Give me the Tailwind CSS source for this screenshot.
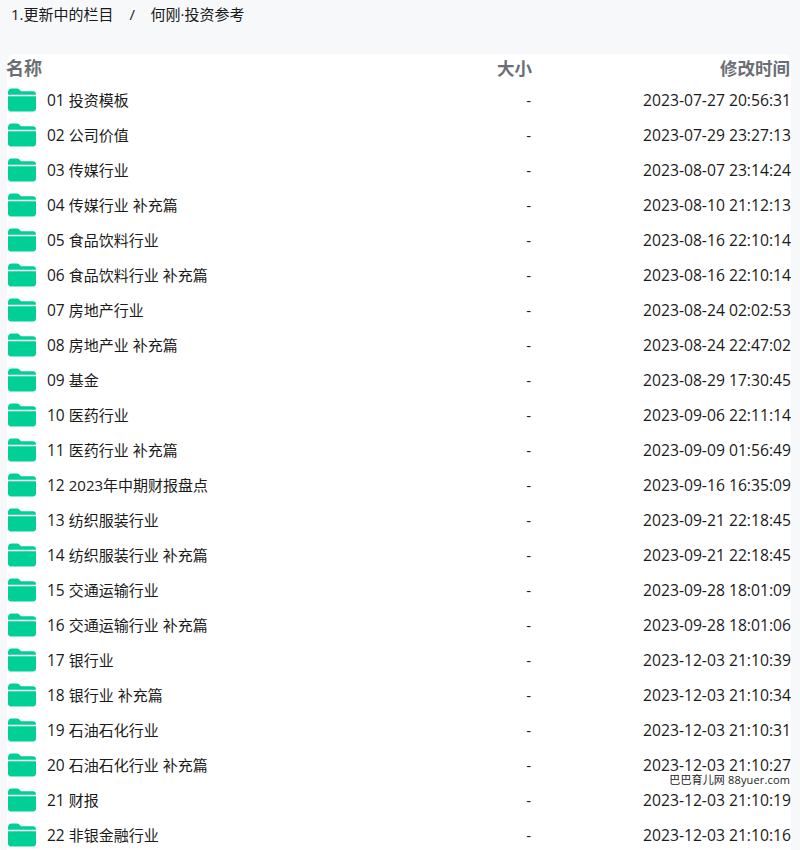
<!DOCTYPE html>
<html lang="zh-CN">
<head>
  <meta charset="UTF-8" />
  <title>何刚·投资参考</title>
  <script src="https://cdn.jsdelivr.net/npm/@tailwindcss/browser@4"></script>
</head>
<body class="bg-[#f7f8fa] h-[850px] overflow-hidden font-['Open_Sans','Noto_Sans_CJK_SC',sans-serif] text-[15px] text-[#1a1a1a]">
  <div class="h-[54px] pl-[11px] pt-[4px] leading-[20px]">
    <span>1.更新中的栏目</span><span class="pl-[16px] pr-[15.500px]">/</span><span>何刚·投资参考</span>
  </div>

  <div class="relative ml-[7px] w-[784px] h-[796px] bg-white rounded-t-[8px]">
    <div class="grid grid-cols-[1fr_100px_260px] h-[29px] items-center -ml-[1px] text-[18px] font-bold text-[#6b6f75]">
      <div>名称</div>
      <div class="text-right -mr-[1px] text-[17.500px]">大小</div>
      <div class="text-right pr-[1px] text-[17.500px]">修改时间</div>
    </div>
    <div id="rows"></div>
    <div class="absolute right-[1px] top-[719px] text-[11px] tracking-[0.15px] leading-[14px] text-[#222]">巴巴育儿网 88yuer.com</div>
  </div>

  <script>
    const rows = [
      ["01", "投资模板", "2023-07-27 20:56:31"],
      ["02", "公司价值", "2023-07-29 23:27:13"],
      ["03", "传媒行业", "2023-08-07 23:14:24"],
      ["04", "传媒行业 补充篇", "2023-08-10 21:12:13"],
      ["05", "食品饮料行业", "2023-08-16 22:10:14"],
      ["06", "食品饮料行业 补充篇", "2023-08-16 22:10:14"],
      ["07", "房地产行业", "2023-08-24 02:02:53"],
      ["08", "房地产业 补充篇", "2023-08-24 22:47:02"],
      ["09", "基金", "2023-08-29 17:30:45"],
      ["10", "医药行业", "2023-09-06 22:11:14"],
      ["11", "医药行业 补充篇", "2023-09-09 01:56:49"],
      ["12", "2023年中期财报盘点", "2023-09-16 16:35:09"],
      ["13", "纺织服装行业", "2023-09-21 22:18:45"],
      ["14", "纺织服装行业 补充篇", "2023-09-21 22:18:45"],
      ["15", "交通运输行业", "2023-09-28 18:01:09"],
      ["16", "交通运输行业 补充篇", "2023-09-28 18:01:06"],
      ["17", "银行业", "2023-12-03 21:10:39"],
      ["18", "银行业 补充篇", "2023-12-03 21:10:34"],
      ["19", "石油石化行业", "2023-12-03 21:10:31"],
      ["20", "石油石化行业 补充篇", "2023-12-03 21:10:27"],
      ["21", "财报", "2023-12-03 21:10:19"],
      ["22", "非银金融行业", "2023-12-03 21:10:16"],
    ];
    document.getElementById("rows").innerHTML = rows.map(([num, name, time]) => `
      <div class="grid grid-cols-[1fr_100px_260px] h-[35px] items-center">
        <div class="flex items-center pl-[1px]">
          <svg class="w-[28px] h-[24px] mr-[11px] -translate-y-[1px]" viewBox="0 0 28 24">
            <path fill="#00cf96" d="M0 4.500C0 2 1.500.5 3.500.5h5.200c1.200 0 2 .5 2.800 1.300l.9.9c.4.4.8.5 1.400.5H25c1.800 0 3 1.200 3 3v.6H0z"/>
            <path fill="#00cf96" d="M0 8.200h28V20.500c0 1.900-1.300 3-3 3H3c-1.700 0-3-1.100-3-3z"/>
          </svg>
          <span class="translate-y-[-0.500px]"><span class="text-[15.500px] mr-[4px]">${num}</span>${name}</span>
        </div>
        <div class="text-right translate-y-[-0.500px]">-</div>
        <div class="text-right text-[15.700px] translate-y-[-0.500px]">${time}</div>
      </div>`).join("");
  </script>
</body>
</html>
